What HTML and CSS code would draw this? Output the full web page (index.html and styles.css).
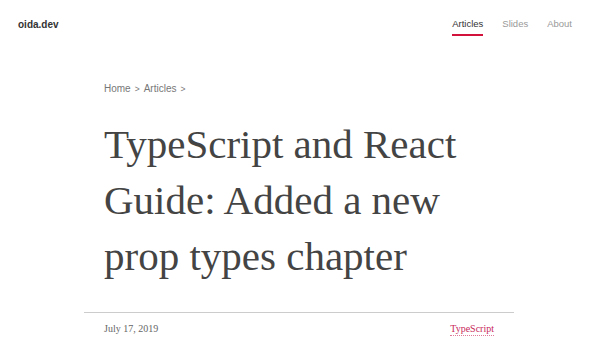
FILE: index.html
```html
<!DOCTYPE html>
<html>
<head>
<meta charset="utf-8">
<link rel="stylesheet" href="styles.css">
</head>
<body>
<header class="site-header">
  <a class="logo" href="#">oida.dev</a>
  <nav class="nav">
    <a class="nav-item active" href="#">Articles</a>
    <a class="nav-item" href="#">Slides</a>
    <a class="nav-item" href="#">About</a>
  </nav>
</header>
<main class="article">
  <div class="breadcrumb">
    <a href="#">Home</a><span class="sep">&gt;</span><a href="#">Articles</a><span class="sep">&gt;</span>
  </div>
  <h1 class="title">TypeScript and React Guide: Added a new prop types chapter</h1>
  <div class="meta">
    <span class="date">July 17, 2019</span>
    <a class="tag" href="#">TypeScript</a>
  </div>
</main>
</body>
</html>
```
FILE: styles.css
```css
html, body {
  margin: 0;
  padding: 0;
  background: #fff;
}
body {
  font-family: "Liberation Sans", Arial, sans-serif;
  color: #333;
  width: 600px;
  height: 338px;
  overflow: hidden;
}
a {
  text-decoration: none;
  color: inherit;
}
.site-header {
  display: flex;
  justify-content: space-between;
  align-items: flex-start;
  padding: 18px 28px 0 18px;
  height: 40px;
  box-sizing: border-box;
}
.logo {
  margin-top: 1px;
  font-size: 10px;
  font-weight: bold;
  color: #333;
  line-height: 12px;
}
.nav {
  display: flex;
  gap: 19px;
}
.nav-item {
  font-size: 9.5px;
  line-height: 12px;
  color: #999;
  padding-bottom: 4px;
  border-bottom: 2px solid transparent;
}
.nav-item.active {
  color: #333;
  border-bottom-color: #d3123c;
}
.article {
  width: 430px;
  margin: 0 0 0 84px;
}
.breadcrumb {
  padding: 0 20px;
  margin-top: 42px;
  font-size: 10px;
  line-height: 14px;
  color: #777;
}
.breadcrumb .sep {
  margin: 0 4px;
  font-size: 8.5px;
}
.title {
  margin: 20px 0 0;
  padding: 0 20px;
  font-family: "Liberation Serif", "Times New Roman", serif;
  font-weight: normal;
  font-size: 41px;
  line-height: 56px;
  color: #444;
}
.meta {
  margin-top: 28px;
  border-top: 1px solid #ccc;
  padding: 10px 20px 0;
  display: flex;
  justify-content: space-between;
  font-family: "Liberation Serif", "Times New Roman", serif;
  font-size: 10px;
  line-height: 12px;
}
.date {
  color: #666;
}
.tag {
  color: #c8285a;
  border-bottom: 1px dotted #e07a9a;
}
```
